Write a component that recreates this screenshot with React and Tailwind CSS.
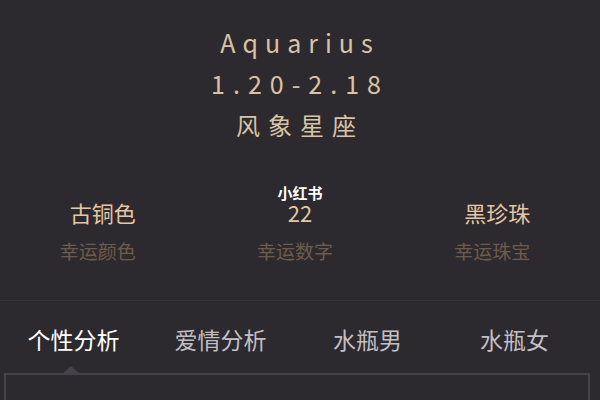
import React from "react";

const font = { fontFamily: '"Noto Sans CJK SC", "Noto Sans", sans-serif' };

const lucky = [
  { value: "古铜色", label: "幸运颜色" },
  { value: "22", label: "幸运数字" },
  { value: "黑珍珠", label: "幸运珠宝" },
];

const tabs = ["个性分析", "爱情分析", "水瓶男", "水瓶女"];

export default function App() {
  return (
    <div className="w-[600px] h-[400px] overflow-hidden bg-[#2d2a2f] flex flex-col" style={font}>
      {/* Header */}
      <div className="flex flex-col items-center pt-[22px]">
        <div className="text-[25px] leading-[40px] tracking-[7px] text-[#d9c3a4]">Aquarius</div>
        <div className="text-[25px] leading-[42px] tracking-[8px] text-[#d9c3a4]">1.20-2.18</div>
        <div className="text-[24px] leading-[42px] tracking-[8px] text-[#d9c3a4]">风象星座</div>
      </div>

      {/* Lucky items */}
      <div className="grid grid-cols-3 mt-[51px] px-[4px]">
        {lucky.map((item, i) => (
          <div key={i} className="relative flex flex-col items-center">
            {i === 1 && (
              <div className="absolute top-[-12px] text-[15px] font-bold text-white leading-none">小红书</div>
            )}
            <div className="text-[22px] leading-[30px] text-[#e4c7a2]">{item.value}</div>
            <div className="text-[19px] leading-[26px] mt-[11px] text-[#6e5c4b] mr-[10px]">{item.label}</div>
          </div>
        ))}
      </div>

      <div className="mt-[36px] border-t border-[#35323a]" />

      {/* Tabs */}
      <div className="grid grid-cols-4 mt-[22px] pr-[12px]">
        {tabs.map((t, i) => (
          <div
            key={t}
            className={`text-center text-[23px] leading-[32px] ${i === 0 ? "text-white" : "text-[#c2bfc4]"}`}
          >
            {t}
          </div>
        ))}
      </div>

      {/* Content box */}
      <div className="relative mt-[18px] ml-[4px] mr-[10px] flex-1 border-t-2 border-l-2 border-r-2 border-[#45424a]">
        <div className="absolute left-[56px] top-[-9px] w-0 h-0 border-l-[9px] border-r-[9px] border-b-[8px] border-l-transparent border-r-transparent border-b-[#45424a]" />
      </div>
    </div>
  );
}
